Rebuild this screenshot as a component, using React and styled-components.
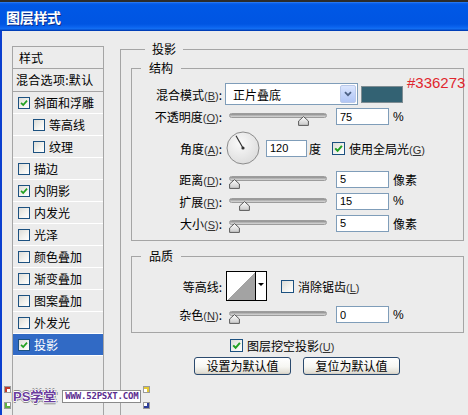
import React from 'react';
import styled, { createGlobalStyle } from 'styled-components';

const Global = createGlobalStyle`
  html, body { margin: 0; padding: 0; }
  body {
    width: 468px; height: 415px; overflow: hidden; background: #ECECEC;
    font-family: "Noto Sans CJK SC", "Liberation Sans", sans-serif;
    font-size: 12px; color: #000;
  }
`;

const Window = styled.div`
  position: relative;
  width: 468px; height: 415px;
  display: flex; flex-direction: column; overflow: hidden;
  background: #ECECEC;
`;

const TitleBar = styled.div`
  flex: none; height: 31px; box-sizing: border-box;
  border-top: 2px solid #2B2B2B;
  background: linear-gradient(to bottom, #3B8AF4 0px, #0E62EC 1px, #0058E6 3px, #0055E2 22px, #0A63EE 25px, #1470F2 27px, #0044C4 28px, #003AAD 29px);
  display: flex; align-items: center; padding: 1px 0 0 6px;
  color: #fff; font-weight: bold; font-size: 14px; letter-spacing: -0.3px;
  text-shadow: 1px 1px 0 #0A2D8A;
`;

const Body = styled.div`
  flex: 1; min-height: 0; display: flex; align-items: flex-start;
  border-left: 2px solid #0B3FCF; padding: 11px 0 0 10px; overflow: hidden;
`;

/* ---------- left list ---------- */
const StyleList = styled.div`
  flex: none; width: 92px; height: 400px; margin-top: 4px; box-sizing: border-box;
  border: 1px solid #A5A5A5; display: flex; flex-direction: column;
`;
const ListHeader = styled.div`
  height: 21px; line-height: 21px; padding-left: 6px; border-bottom: 1px solid #A5A5A5;
`;
const BlendRow = styled.div`
  height: 22px; line-height: 22px; padding-left: 3px; border-bottom: 1px solid #A5A5A5;
  white-space: nowrap; letter-spacing: 0.3px;
`;
const EffectRow = styled.div`
  height: 21px; border-bottom: 1px solid #FFFFFF; display: flex; align-items: center;
  gap: 4px; padding-left: ${p => (p.$indent ? 20 : 5)}px; white-space: nowrap;
  background: ${p => (p.$selected ? '#316AC5' : 'transparent')};
  color: ${p => (p.$selected ? '#FFFFFF' : '#000')};
`;

/* ---------- checkbox ---------- */
const Box = styled.span`
  flex: none; width: ${p => p.$size}px; height: ${p => p.$size}px; box-sizing: border-box;
  border: 1px solid #1C5180;
  background: linear-gradient(135deg, #DCDCD7 0%, #F2F2EE 55%, #FFFFFF 100%);
  display: flex; align-items: center; justify-content: center;
`;
function CheckBox({ checked, size = 13 }) {
  return (
    <Box $size={size}>
      {checked && (
        <svg width={size - 4} height={size - 4} viewBox="0 0 9 9">
          <path d="M1.2 4.4 L3.6 6.8 L7.9 1.9" fill="none" stroke="#21A121" strokeWidth="2" />
        </svg>
      )}
    </Box>
  );
}

/* ---------- group boxes ---------- */
const Group = styled.fieldset`
  flex: none; margin: ${p => p.$m || '0'}; min-width: 0; box-sizing: border-box;
  width: ${p => p.$w}px; ${p => (p.$h ? `height: ${p.$h}px;` : '')}
  border: 1px solid #A5A5A5; padding: ${p => p.$pad};
  display: flex; flex-direction: column;
`;
const Legend = styled.legend`
  font-size: 12px; line-height: 14px; height: 14px; padding: 0 ${p => p.$px}px;
  margin-left: ${p => p.$ml}px;
`;

const Row = styled.div`
  flex: none; height: ${p => p.$h}px; display: flex; align-items: center; white-space: nowrap;
  margin-left: ${p => p.$ml || 0}px; margin-top: ${p => p.$mt || 0}px;
`;
const Label = styled.div`
  flex: none; width: 90px; text-align: right; white-space: nowrap;
`;
const Acc = styled.span`
  font-family: "Liberation Sans", sans-serif; font-size: 11px; color: #333;
  u { text-decoration: underline; text-underline-offset: 1px; }
`;
const Text = styled.span`
  flex: none; margin-left: ${p => p.$ml || 0}px;
`;

/* select */
const Select = styled.div`
  flex: none; width: 133px; height: 22px; margin-left: 3px; box-sizing: border-box;
  border: 1px solid #7F9DB9; background: #fff; display: flex; align-items: center;
  padding: 1px;
`;
const SelectText = styled.span`
  flex: 1; padding-left: 6px;
`;
const SelectButton = styled.span`
  flex: none; width: 16px; height: 18px; box-sizing: border-box; border-radius: 2px;
  border: 1px solid #BAC9EA;
  background: linear-gradient(to bottom, #DCE6FD, #C3D4FA 50%, #B2C6F5);
  display: flex; align-items: center; justify-content: center;
`;
const Swatch = styled.div`
  flex: none; width: 42px; height: 17px; margin-left: 3px; box-sizing: border-box;
  background: #336273; border: 1px solid #7E8C92;
`;
const Hex = styled.span`
  flex: none; align-self: flex-start; margin: -8px 0 0 4px; line-height: 16px;
  font-family: "Liberation Sans", sans-serif; font-size: 15px; color: #E0262E;
`;

/* slider */
const Slider = styled.div`
  flex: none; position: relative; width: 98px; height: 5px; margin: 0 0 2px ${p => p.$ml || 0}px;
  box-sizing: border-box; border-radius: 3px; border: 1px solid #9C9C9C;
  background: linear-gradient(to bottom, #8C8C8C, #BDBDBD 60%, #D8D8D8);
`;
const ThumbWrap = styled.span`
  position: absolute; top: -2px; width: 11px; height: 10px; display: block;
`;
function SliderCtl({ pos, ml = 7 }) {
  return (
    <Slider $ml={ml}>
      <ThumbWrap style={{ left: `${pos * 87 - 1}px` }}>
        <svg width="11" height="10" viewBox="0 0 11 10">
          <defs>
            <linearGradient id="tg" x1="0" y1="0" x2="0" y2="1">
              <stop offset="0" stopColor="#FFFFFF" />
              <stop offset="1" stopColor="#C8C8C8" />
            </linearGradient>
          </defs>
          <path d="M5.5 0.6 L10.4 5 L10.4 9.4 L0.6 9.4 L0.6 5 Z" fill="url(#tg)" stroke="#5A5A5A" strokeWidth="1" />
        </svg>
      </ThumbWrap>
    </Slider>
  );
}

const Num = styled.input`
  flex: none; width: ${p => p.$w || 53}px; height: 17px; margin-left: ${p => p.$ml || 9}px;
  box-sizing: border-box; border: 1px solid #7F9DB9; background: #fff; padding: 0 0 0 3px;
  font-family: "Liberation Sans", sans-serif; font-size: 11px; color: #000; outline: none;
`;
const Unit = styled.span`
  flex: none; margin-left: 4px;
  font-family: ${p => (p.$latin ? '"Liberation Sans", sans-serif' : 'inherit')};
`;

/* dial */
const Dial = styled.svg`
  flex: none; margin-left: 4px;
`;

/* contour */
const Contour = styled.div`
  flex: none; width: 41px; height: 30px; margin-left: 4px; box-sizing: border-box;
  border: 1px solid #000; display: flex; background: #fff;
`;
const ContourPreview = styled.div`
  flex: 1; background: linear-gradient(to top left, #A3A3A3 50%, #FFFFFF 50%);
`;
const ContourArrow = styled.div`
  flex: none; width: 10px; border-left: 1px solid #000; display: flex;
  align-items: center; justify-content: center;
  &::after {
    content: ''; border-left: 3px solid transparent; border-right: 3px solid transparent;
    border-top: 3px solid #000; margin-top: -3px;
  }
`;

const CheckLabel = styled.label`
  flex: none; display: flex; align-items: center; gap: 4px; margin-left: ${p => p.$ml || 0}px;
`;

const ButtonRow = styled.div`
  flex: none; display: flex; gap: 12px; margin: 3px 0 0 63px;
`;
const Button = styled.button`
  flex: none; width: 97px; height: 18px; box-sizing: border-box; padding: 0;
  border: 1px solid #2B4A6E; border-radius: 3px;
  background: linear-gradient(to bottom, #FFFFFF, #F6F6F2 55%, #E2DFD6 90%, #CFCBC0);
  font-family: "Noto Sans CJK SC", sans-serif; font-size: 12px; line-height: 16px; color: #000;
`;

/* watermark overlay */
const Watermark = styled.div`
  position: absolute; left: 5px; top: 386px; height: 23px;
  display: flex; align-items: stretch; pointer-events: none;
`;
const Corners = styled.div`
  flex: none; display: flex; flex-direction: column; justify-content: space-between;
  margin-left: ${p => p.$ml || 0}px; padding: 1px 0;
`;
const Corner = styled.span`
  width: 5px; height: 5px; box-sizing: border-box; background: #fff;
  outline: 1px solid #9A9A9A;
  border-${p => p.$v}: 2px solid ${p => p.$c};
  border-${p => p.$h}: 2px solid ${p => p.$c};
`;
const WmLogo = styled.span`
  align-self: center; margin: 0 0 2px 3px; font-weight: bold; font-size: 13px; line-height: 14px;
  color: #6A3B9C; font-family: "Liberation Sans", "Noto Sans CJK SC", sans-serif;
  text-shadow: 1px 0 0 #fff, -1px 0 0 #fff, 0 1px 0 #fff, 0 -1px 0 #fff,
    2px 0 0 #8A8A8A, -2px 0 0 #8A8A8A, 0 2px 0 #8A8A8A, 0 -2px 0 #8A8A8A;
`;
const WmUrl = styled.span`
  align-self: center; margin: 0 0 2px 6px; padding: 0 2px; height: 11px; line-height: 11px;
  background: #fff; border: 1px solid #8A8A8A;
  font-family: "DejaVu Sans Mono", monospace; font-weight: bold; font-size: 9px; color: #5B2C8F;
  letter-spacing: -0.2px;
`;

const effects = [
  { label: '斜面和浮雕', checked: true },
  { label: '等高线', indent: true },
  { label: '纹理', indent: true },
  { label: '描边' },
  { label: '内阴影', checked: true },
  { label: '内发光' },
  { label: '光泽' },
  { label: '颜色叠加' },
  { label: '渐变叠加' },
  { label: '图案叠加' },
  { label: '外发光' },
  { label: '投影', checked: true, selected: true },
];

const Key = ({ k }) => (
  <Acc>(<u>{k}</u>)</Acc>
);

export default function App() {
  return (
    <>
      <Global />
      <Window>
        <TitleBar>图层样式</TitleBar>
        <Body>
          <StyleList>
            <ListHeader>样式</ListHeader>
            <BlendRow>混合选项:默认</BlendRow>
            {effects.map(e => (
              <EffectRow key={e.label} $indent={e.indent} $selected={e.selected}>
                <CheckBox checked={e.checked} size={12} />
                <span>{e.label}</span>
              </EffectRow>
            ))}
          </StyleList>

          <Group $w={360} $h={380} $m="0 0 0 16px" $pad="5px 0 0 10px">
            <Legend $ml={14} $px={7}>投影</Legend>

            <Group $w={333} $pad="8px 0 6px 0">
              <Legend $ml={9} $px={8}>结构</Legend>
              <Row $h={22}>
                <Label>混合模式<Key k="B" />:</Label>
                <Select>
                  <SelectText>正片叠底</SelectText>
                  <SelectButton>
                    <svg width="8" height="6" viewBox="0 0 8 6">
                      <path d="M1 1.2 L4 4.2 L7 1.2" fill="none" stroke="#4D6185" strokeWidth="1.8" />
                    </svg>
                  </SelectButton>
                </Select>
                <Swatch />
                <Hex>#336273</Hex>
              </Row>
              <Row $h={23}>
                <Label>不透明度<Key k="O" />:</Label>
                <SliderCtl pos={0.79} />
                <Num readOnly value="75" />
                <Unit $latin>%</Unit>
              </Row>
              <Row $h={40}>
                <Label>角度<Key k="A" />:</Label>
                <Dial width="34" height="34" viewBox="0 0 34 34">
                  <defs>
                    <radialGradient id="dg" cx="0.4" cy="0.35" r="0.7">
                      <stop offset="0" stopColor="#FAFAFA" />
                      <stop offset="1" stopColor="#DCDCDC" />
                    </radialGradient>
                  </defs>
                  <circle cx="17" cy="17" r="16" fill="url(#dg)" stroke="#8C8C8C" strokeWidth="1" />
                  <line x1="17" y1="17" x2="10" y2="4.8" stroke="#333" strokeWidth="1.2" />
                  <circle cx="17" cy="17" r="1.6" fill="#333" />
                </Dial>
                <Num readOnly value="120" $w={41} $ml={6} />
                <Text $ml={2}>度</Text>
                <CheckLabel $ml={11}>
                  <CheckBox checked />
                  <span>使用全局光<Key k="G" /></span>
                </CheckLabel>
              </Row>
              <Row $h={22}>
                <Label>距离<Key k="D" />:</Label>
                <SliderCtl pos={0} />
                <Num readOnly value="5" />
                <Unit>像素</Unit>
              </Row>
              <Row $h={22}>
                <Label>扩展<Key k="R" />:</Label>
                <SliderCtl pos={0.115} />
                <Num readOnly value="15" />
                <Unit $latin>%</Unit>
              </Row>
              <Row $h={22}>
                <Label>大小<Key k="S" />:</Label>
                <SliderCtl pos={0} />
                <Num readOnly value="5" />
                <Unit>像素</Unit>
              </Row>
            </Group>

            <Group $w={333} $m="8px 0 0 0" $pad="6px 0 6px 0">
              <Legend $ml={9} $px={8}>品质</Legend>
              <Row $h={34}>
                <Label>等高线:</Label>
                <Contour>
                  <ContourPreview />
                  <ContourArrow />
                </Contour>
                <CheckLabel $ml={14}>
                  <CheckBox />
                  <span>消除锯齿<Key k="L" /></span>
                </CheckLabel>
              </Row>
              <Row $h={23}>
                <Label>杂色<Key k="N" />:</Label>
                <SliderCtl pos={0} />
                <Num readOnly value="0" />
                <Unit $latin>%</Unit>
              </Row>
            </Group>

            <Row $h={17} $mt={4} $ml={99}>
              <CheckLabel>
                <CheckBox checked />
                <span>图层挖空投影<Key k="U" /></span>
              </CheckLabel>
            </Row>
            <ButtonRow>
              <Button>设置为默认值</Button>
              <Button>复位为默认值</Button>
            </ButtonRow>
          </Group>
        </Body>

        <Watermark>
          <Corners>
            <Corner $v="top" $h="left" $c="#C0392B" />
            <Corner $v="bottom" $h="left" $c="#5DB043" />
          </Corners>
          <WmLogo>PS学堂</WmLogo>
          <WmUrl>WWW.52PSXT.COM</WmUrl>
          <Corners $ml={3}>
            <Corner $v="top" $h="right" $c="#E3C832" />
            <Corner $v="bottom" $h="right" $c="#2D3E9A" />
          </Corners>
        </Watermark>
      </Window>
    </>
  );
}
